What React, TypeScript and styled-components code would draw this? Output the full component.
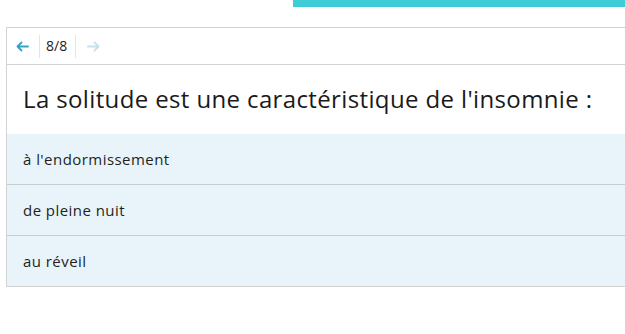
import React from "react";
import styled, { createGlobalStyle } from "styled-components";

const Global = createGlobalStyle`
  html, body { margin: 0; padding: 0; background: #fff; overflow: hidden; }
  body { font-family: "Open Sans", "Noto Sans", sans-serif; color: #222; }
`;

const Page = styled.div`
  width: 625px;
  height: 334px;
  overflow: hidden;
`;

const TopBar = styled.div`
  height: 7px;
  margin-left: 293px;
  background: #3ecdd6;
`;

const Card = styled.div`
  margin: 20px -20px 0 6px;
  border: 1px solid #d3d3d3;
  background: #fff;
`;

const Toolbar = styled.div`
  display: flex;
  align-items: center;
  height: 36px;
  border-bottom: 1px solid #d3d3d3;
  padding-left: 7px;
`;

const NavButton = styled.button<{ $disabled?: boolean }>`
  border: 0;
  background: none;
  padding: 0;
  width: 16px;
  height: 36px;
  display: flex;
  align-items: center;
  justify-content: center;
  margin-left: ${(p) => (p.$disabled ? "9px" : "0")};
  color: ${(p) => (p.$disabled ? "#c2e3ec" : "#3aa1c6")};
  cursor: ${(p) => (p.$disabled ? "default" : "pointer")};
`;

const Sep = styled.div<{ $left?: number }>`
  width: 1px;
  height: 23px;
  background: #e4e4e4;
  margin-left: ${(p) => p.$left ?? 0}px;
`;

const Counter = styled.span`
  font-size: 14px;
  color: #222;
  padding: 0 8px 0 6px;
  line-height: 1;
`;

const Title = styled.h1`
  margin: 0;
  font-size: 24px;
  letter-spacing: 0.37px;
  font-weight: 400;
  line-height: 32px;
  padding: 18px 16px 19px 16px;
  color: #1a1a1a;
  white-space: nowrap;
`;

const Options = styled.ul`
  list-style: none;
  margin: 0;
  padding: 0;
`;

const Option = styled.li`
  height: 50px;
  display: flex;
  align-items: center;
  padding-left: 16px;
  background: #e8f4f9;
  font-size: 15px;
  letter-spacing: 0.45px;
  color: #1f1f1f;
  border-bottom: 1px solid #c9cdd0;
  &:last-child { border-bottom: 0; }
`;

const Arrow = ({ dir }: { dir: "left" | "right" }) => (
  <svg width="13" height="11" viewBox="0 0 13 11" fill="none" stroke="currentColor" strokeWidth="1.8" strokeLinecap="round" strokeLinejoin="round">
    {dir === "left" ? (
      <path d="M12 5.5H1.5M5.5 1.5L1.5 5.5L5.5 9.5" />
    ) : (
      <path d="M1 5.5H11.5M7.5 1.5L11.5 5.5L7.5 9.5" />
    )}
  </svg>
);

export default function App() {
  const options = ["à l'endormissement", "de pleine nuit", "au réveil"];
  return (
    <Page>
      <Global />
      <TopBar />
      <Card>
        <Toolbar>
          <NavButton aria-label="Précédent">
            <Arrow dir="left" />
          </NavButton>
          <Sep $left={9} />
          <Counter>8/8</Counter>
          <Sep />
          <NavButton $disabled aria-label="Suivant">
            <Arrow dir="right" />
          </NavButton>
        </Toolbar>
        <Title>La solitude est une caractéristique de l'insomnie :</Title>
        <Options>
          {options.map((o) => (
            <Option key={o}>{o}</Option>
          ))}
        </Options>
      </Card>
    </Page>
  );
}
